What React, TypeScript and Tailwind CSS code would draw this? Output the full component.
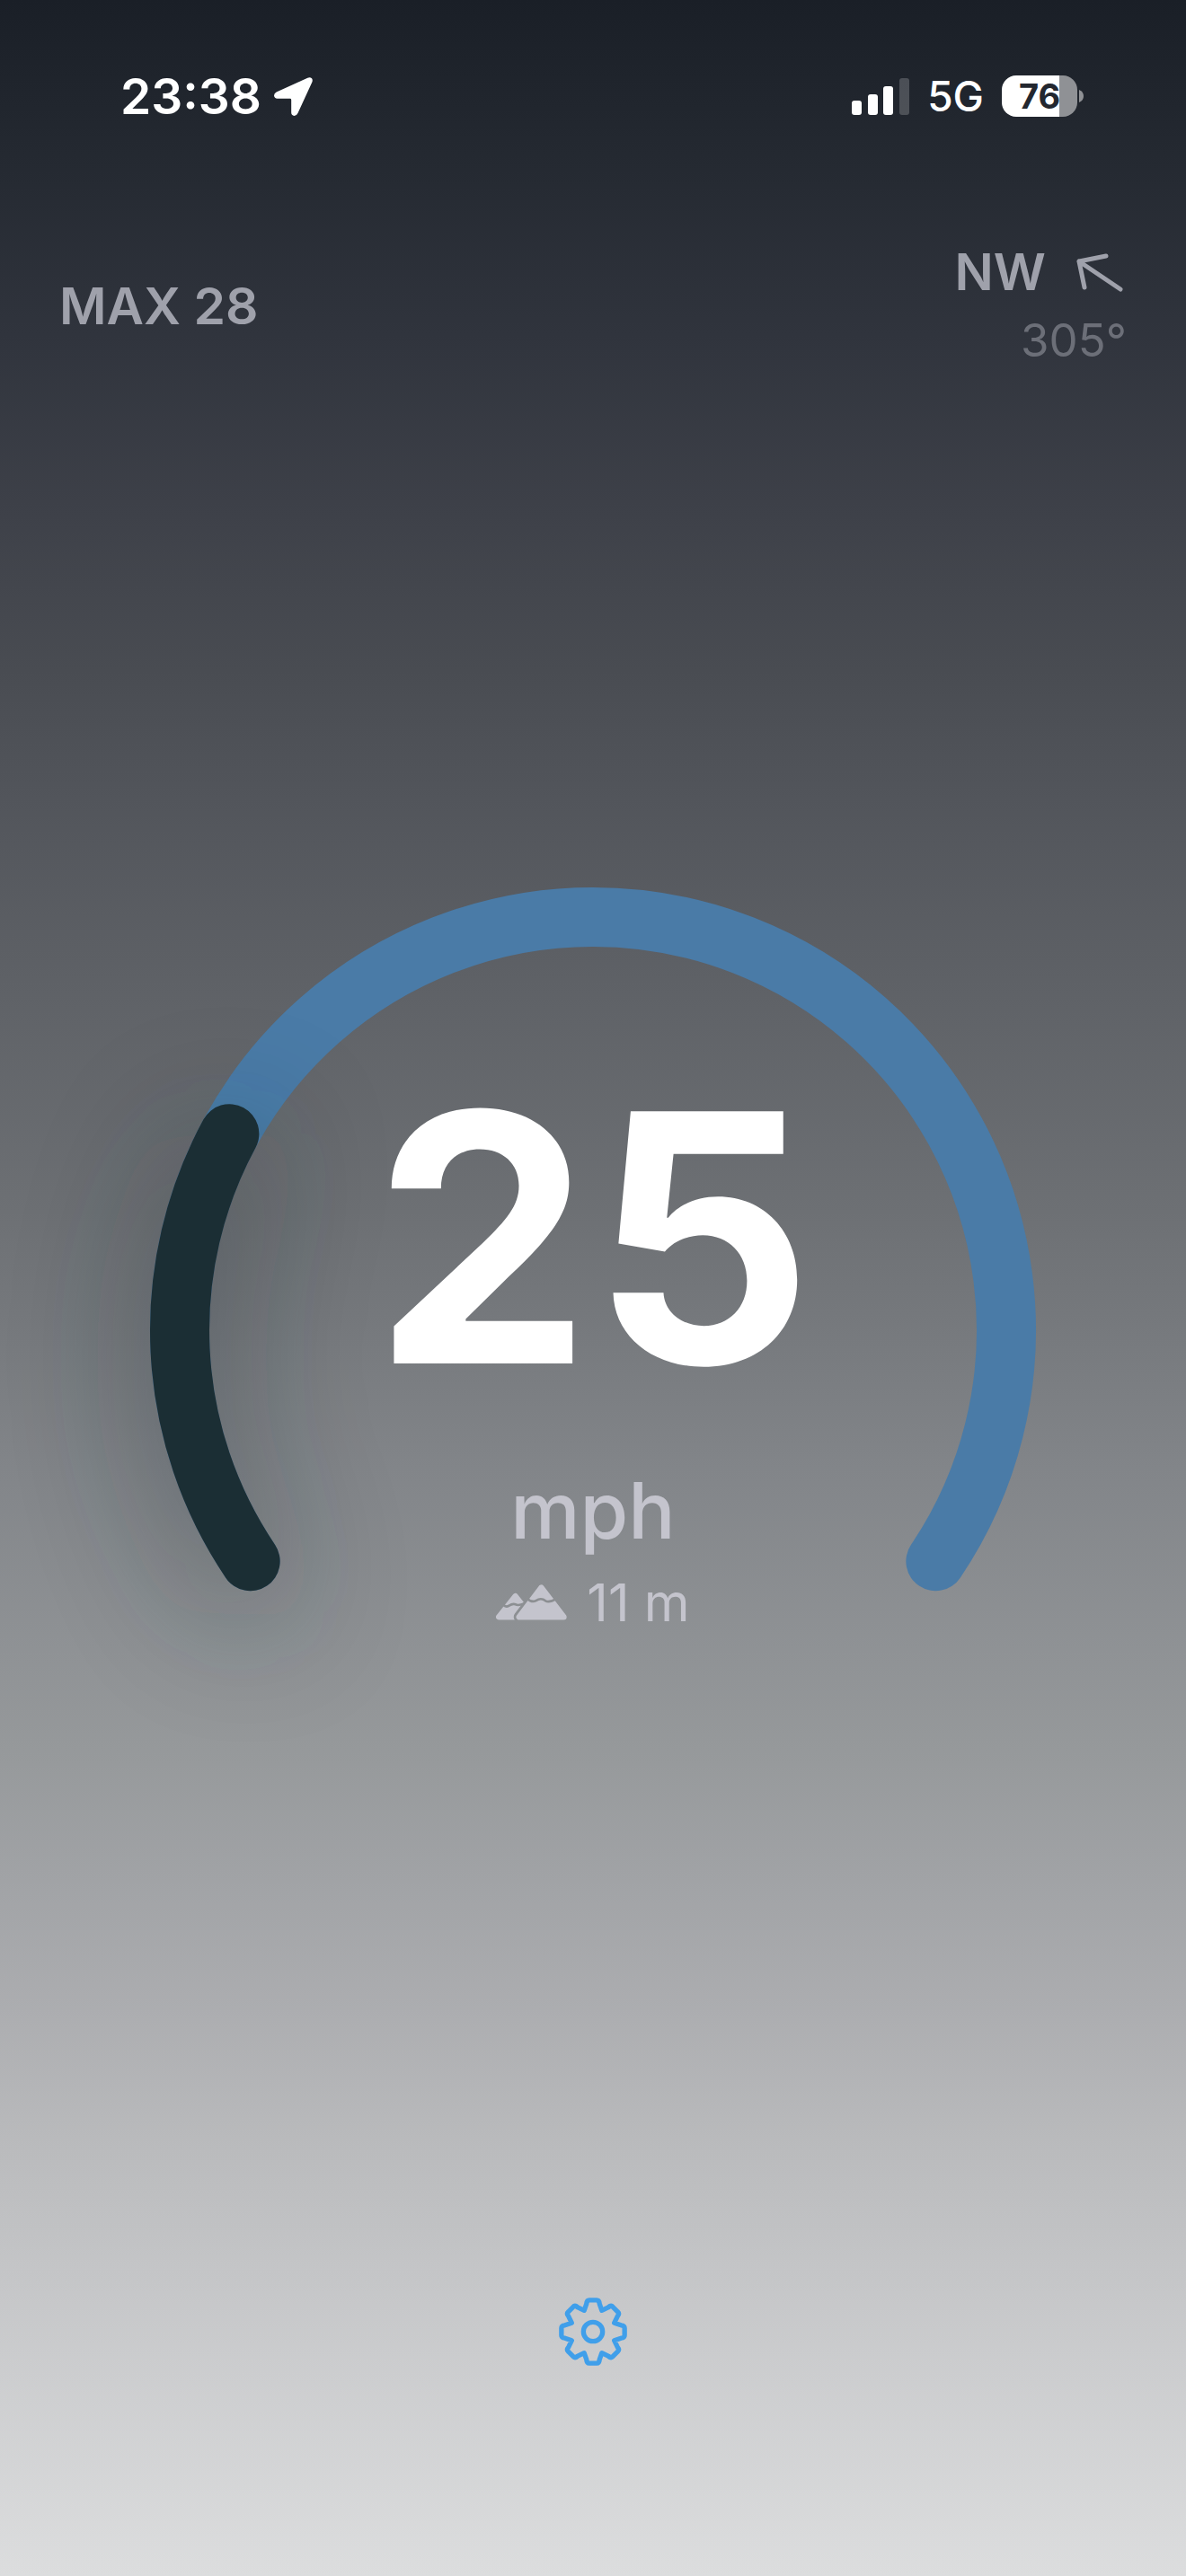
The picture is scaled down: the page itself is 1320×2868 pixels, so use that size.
import { useState } from 'react';

const SWEEP = 248;
const START = 180 - 34; // degrees, clockwise from 3 o'clock
const RADIUS = 460;
const CENTER = 495;
const MAX_DIAL = 100;

// Point on the dial for an angle in degrees
function polar(radius: number, angle: number, cx = CENTER, cy = CENTER) {
  const rad = (angle * Math.PI) / 180;
  return [cx + radius * Math.cos(rad), cy + radius * Math.sin(rad)];
}

function arcPath(from: number, to: number) {
  const [x1, y1] = polar(RADIUS, from);
  const [x2, y2] = polar(RADIUS, to);
  const large = to - from > 180 ? 1 : 0;
  return `M${x1} ${y1}A${RADIUS} ${RADIUS} 0 ${large} 1 ${x2} ${y2}`;
}

// Eight teeth with rounded tips
function gearPath() {
  let d = '';
  for (let i = 0; i < 8; i++) {
    const a = i * 45 - 90;
    const v = polar(77, a - 22.5, 0, 0);
    const s1 = polar(96, a - 13, 0, 0);
    const c1 = polar(108, a - 11, 0, 0);
    const t1 = polar(106, a - 6, 0, 0);
    const t2 = polar(106, a + 6, 0, 0);
    const c2 = polar(108, a + 11, 0, 0);
    const s2 = polar(96, a + 13, 0, 0);
    d += `${i === 0 ? 'M' : 'L'}${v}L${s1}Q${c1} ${t1}L${t2}Q${c2} ${s2}`;
  }
  return d + 'Z';
}

function StatusBar() {
  return (
    <div className="flex h-[70px] items-center justify-between pl-[134px] pr-[114px] text-white">
      <div className="flex items-center gap-[14px]">
        <span className="text-[55px] font-semibold leading-[70px]">23:38</span>
        <svg viewBox="0 0 130 130" className="h-[43px] w-[43px]" fill="currentColor" aria-hidden="true">
          <path d="M8 50L113 2Q122 -1 127 4Q131 9 128 17L80 121Q76 130 68 130Q58 129 58 119V76Q58 72 54 72H11Q1 71 0 62Q0 54 8 50Z" />
        </svg>
      </div>

      <div className="flex items-center">
        <svg viewBox="0 0 64 41" className="h-[41px] w-[64px]" fill="currentColor" aria-hidden="true">
          <rect x="0" y="25" width="11" height="16" rx="3" />
          <rect x="18" y="18" width="11" height="23" rx="3" />
          <rect x="35" y="9" width="11" height="32" rx="3" />
          <rect x="53" y="0" width="11" height="41" rx="3" opacity="0.2" />
        </svg>
        <span className="ml-5 text-[46px] font-medium leading-[70px]">5G</span>
        <div className="ml-5 flex h-[46px] w-[84px] items-center justify-center rounded-2xl bg-[linear-gradient(to_right,#fff_76%,#8f9195_76%)] text-[38px] font-bold leading-none text-[#23272f]">
          76
        </div>
        <svg viewBox="0 0 5 14" className="ml-[2px] h-[14px] w-[5px]" fill="#8f9195" aria-hidden="true">
          <path d="M0 0Q5 2 5 7Q5 12 0 14Z" />
        </svg>
      </div>
    </div>
  );
}

function Mountains() {
  return (
    <svg viewBox="0 0 238 120" className="h-[40px] w-[79px]" fill="currentColor" stroke="currentColor" strokeLinejoin="round" aria-hidden="true">
      <mask id="back" maskUnits="userSpaceOnUse" x="0" y="0" width="238" height="120">
        <rect width="238" height="120" fill="#fff" stroke="none" />
        <path d="M152 11L78 109H227Z" fill="#000" stroke="#000" strokeWidth="37" />
        <path d="M24 68Q33 78 44 71Q56 63 66 67Q74 72 96 64" fill="none" stroke="#000" strokeWidth="8" />
      </mask>
      <mask id="front" maskUnits="userSpaceOnUse" x="0" y="0" width="238" height="120">
        <rect width="238" height="120" fill="#fff" stroke="none" />
        <path d="M104 47Q121 62 134 54Q152 43 166 55Q179 62 201 48" fill="none" stroke="#000" strokeWidth="8" />
      </mask>
      <path d="M65 40L10 109H120Z" strokeWidth="20" mask="url(#back)" />
      <path d="M152 11L78 109H227Z" strokeWidth="20" mask="url(#front)" />
    </svg>
  );
}

function Gauge({ speed, altitude }: { speed: number; altitude: number }) {
  const end = START + (SWEEP * speed) / MAX_DIAL;

  return (
    <div className="grid w-3/4 items-center">
      <svg viewBox="0 0 990 990" className="col-start-1 row-start-1 w-full overflow-visible" fill="none" strokeWidth="66" strokeLinecap="round" aria-hidden="true">
        <filter id="glow" filterUnits="userSpaceOnUse" x="-300" y="0" width="1000" height="1300">
          <feGaussianBlur stdDeviation="74" />
        </filter>
        <path d={arcPath(START, START + SWEEP)} stroke="#4a7ba7" />
        <path d={arcPath(START, end)} stroke="#1b2e34" opacity="0.5" transform="translate(0 30)" filter="url(#glow)" />
        <path d={arcPath(START, end)} stroke="#1b2e34" />
      </svg>

      {/* Readout */}
      <div className="col-start-1 row-start-1 flex flex-col items-center pt-[72px]">
        <div className="text-[386px] font-bold leading-[320px] text-white">{Math.floor(speed)}</div>
        <div className="mt-24 text-[87px] font-medium leading-[96px] text-[#c4c4cd]">mph</div>
        <div className="mt-[22px] flex items-center gap-[22px] text-[58px] leading-[64px] text-[#c4c4cd]">
          <Mountains />
          <span>{altitude} m</span>
        </div>
      </div>
    </div>
  );
}

export default function App() {
  const [open, setOpen] = useState(false);

  return (
    <main className="flex min-h-screen flex-col bg-[linear-gradient(to_bottom,#1a1f27_0%,#242931_6%,#30343d_13%,#3e4149_20%,#494c52_26%,#52555b_31%,#5e6166_38%,#6d7074_47%,#75787c_51%,#828589_57%,#8f9295_64%,#96999b_68%,#a1a3a6_73%,#acadb0_78%,#b9babc_83%,#c6c7c9_89%,#dcddde_100%)] pt-[72px] font-['Inter',sans-serif]">
      <StatusBar />

      <header className="mt-[123px] flex items-center justify-between px-[66px] text-[57px] leading-[76px] text-[#9fa1ab]">
        <div className="font-semibold">MAX 28</div>
        <div className="flex flex-col items-end">
          <div className="flex items-center gap-[34px] font-semibold">
            NW
            <svg viewBox="0 0 56 44" className="h-[44px] w-[56px]" fill="none" stroke="currentColor" strokeWidth="5" strokeLinecap="round" strokeLinejoin="round" aria-hidden="true">
              <path d="M49 41L3 10M33 4L3 10L9 39" />
            </svg>
          </div>
          <div className="text-[51px] font-normal text-[#6c6f78]">305°</div>
        </div>
      </header>

      <section className="flex flex-1 items-center justify-center">
        <Gauge speed={25.16} altitude={11} />
      </section>

      <footer className="flex justify-center pb-[221px]">
        <button
          type="button"
          aria-label="Settings"
          aria-expanded={open}
          onClick={() => setOpen(!open)}
          className="p-[13px] text-[#409fea]"
        >
          <svg viewBox="-114 -114 228 228" className="h-[76px] w-[76px]" fill="none" stroke="currentColor" strokeWidth="16" strokeLinejoin="round">
            <path d={gearPath()} />
            <circle r="32" />
          </svg>
        </button>
      </footer>
    </main>
  );
}
